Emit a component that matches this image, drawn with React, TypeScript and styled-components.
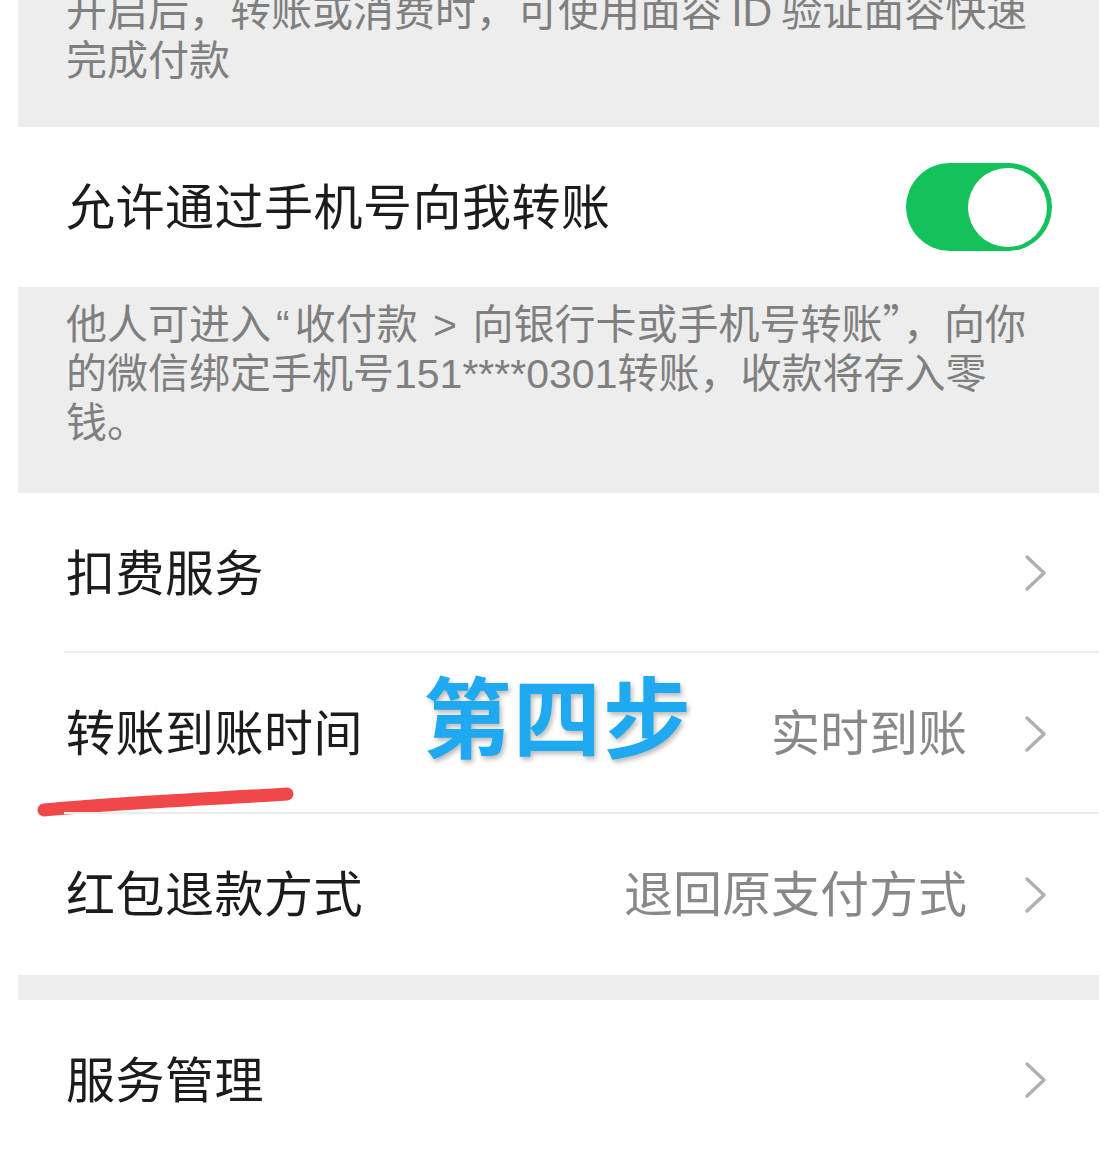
import styled, { createGlobalStyle } from 'styled-components'

const GlobalStyle = createGlobalStyle`
  body {
    margin: 0;
    background: #ffffff;
    font-family: "Noto Sans CJK SC", "Noto Sans", sans-serif;
    -webkit-font-smoothing: antialiased;
  }
`

const Page = styled.div`
  width: 1081px;
  margin-left: 18px;
  height: 1152px;
  overflow: hidden;
  background: #ffffff;
`

const Note = styled.div<{ $height: number }>`
  box-sizing: border-box;
  height: ${p => p.$height}px;
  overflow: hidden;
  background: #ededed;
  padding: 0 48px;
`

const NoteText = styled.p<{ $offset: number }>`
  margin: ${p => p.$offset}px 0 0 0;
  color: #7f7f7f;
  font-family: "Noto Sans CJK SC", "Noto Sans", sans-serif;
  font-size: 41px;
  line-height: 49px;
`

const Latin = styled.span<{ $pad?: number }>`
  font-family: "Liberation Sans", "Noto Sans", sans-serif;
  line-height: 1;
  padding: 0 ${p => p.$pad ?? 0}px;
`

const Gap = styled.div`
  height: 25px;
  background: #ededed;
`

const Group = styled.div`
  background: #ffffff;
`

const Row = styled.div<{ $divider?: boolean; $height?: number }>`
  position: relative;
  display: flex;
  align-items: center;
  box-sizing: border-box;
  height: ${p => p.$height ?? 161}px;
  padding: 0 53px 0 48px;

  &::after {
    content: '';
    display: ${p => (p.$divider ? 'block' : 'none')};
    position: absolute;
    left: 46px;
    right: 0;
    bottom: 0;
    height: 2px;
    background: #ececec;
  }
`

const Label = styled.span`
  margin-bottom: 8px;
  font-size: 49px;
  color: #1c1c1c;
  letter-spacing: 0.5px;
`

const Value = styled.span`
  margin-left: auto;
  margin-right: 56px;
  margin-bottom: 8px;
  font-size: 49px;
  color: #888888;
`

const ChevronBox = styled.svg<{ $inline?: boolean }>`
  margin-left: ${p => (p.$inline ? '0' : 'auto')};
  margin-right: -1px;
  flex-shrink: 0;
`

const Toggle = styled.div<{ $on: boolean }>`
  margin-left: auto;
  margin-right: -6px;
  width: 146px;
  height: 88px;
  border-radius: 44px;
  background: ${p => (p.$on ? '#14c25b' : '#e5e5e5')};
  display: flex;
  align-items: center;
  justify-content: ${p => (p.$on ? 'flex-end' : 'flex-start')};
  padding: 0 5px;
  box-sizing: border-box;
`

const Knob = styled.div`
  width: 79px;
  height: 79px;
  border-radius: 50%;
  background: #ffffff;
`

const StepMark = styled.span`
  position: absolute;
  left: 405px;
  top: 16px;
  font-size: 88px;
  line-height: 88px;
  font-weight: 700;
  color: #1ea9f1;
  letter-spacing: 2px;
  text-shadow: 2px 3px 5px rgba(0, 0, 0, 0.28);
`

const Underline = styled.svg`
  position: absolute;
  left: 0;
  top: 0;
  overflow: visible;
  pointer-events: none;
`

const Chevron = ({ inline }: { inline?: boolean }) => (
  <ChevronBox $inline={inline} width="24" height="38" viewBox="0 0 24 38">
    <path d="M4 3 L21 19 L4 35" fill="none" stroke="#b0b0b0" strokeWidth="3.5" strokeLinecap="round" strokeLinejoin="round" />
  </ChevronBox>
)

export default function App() {
  return (
    <>
      <GlobalStyle />
      <Page>
        <Note $height={127}>
          <NoteText $offset={-16}>
            开启后，转账或消费时，可使用面容 <Latin>ID</Latin> 验证面容快速<br />完成付款
          </NoteText>
        </Note>

        <Group>
          <Row $height={160}>
            <Label>允许通过手机号向我转账</Label>
            <Toggle $on>
              <Knob />
            </Toggle>
          </Row>
        </Group>

        <Note $height={206}>
          <NoteText $offset={10}>
            他人可进入<Latin $pad={5}>“</Latin>收付款<Latin $pad={4}> &gt; </Latin>向银行卡或手机号转账”，向你<br />
            的微信绑定手机号<Latin>151****0301</Latin>转账，收款将存入零<br />
            钱。
          </NoteText>
        </Note>

        <Group>
          <Row $divider $height={160}>
            <Label>扣费服务</Label>
            <Chevron />
          </Row>
          <Row $divider>
            <Label>转账到账时间</Label>
            <StepMark>第四步</StepMark>
            <Value>实时到账</Value>
            <Chevron inline />
            <Underline width="300" height="180">
              <path d="M26 157 C100 150 190 146 269 141" fill="none" stroke="#f04848" strokeWidth="13" strokeLinecap="round" />
            </Underline>
          </Row>
          <Row>
            <Label>红包退款方式</Label>
            <Value>退回原支付方式</Value>
            <Chevron inline />
          </Row>
        </Group>

        <Gap />

        <Group>
          <Row $height={160}>
            <Label>服务管理</Label>
            <Chevron />
          </Row>
        </Group>
      </Page>
    </>
  )
}
